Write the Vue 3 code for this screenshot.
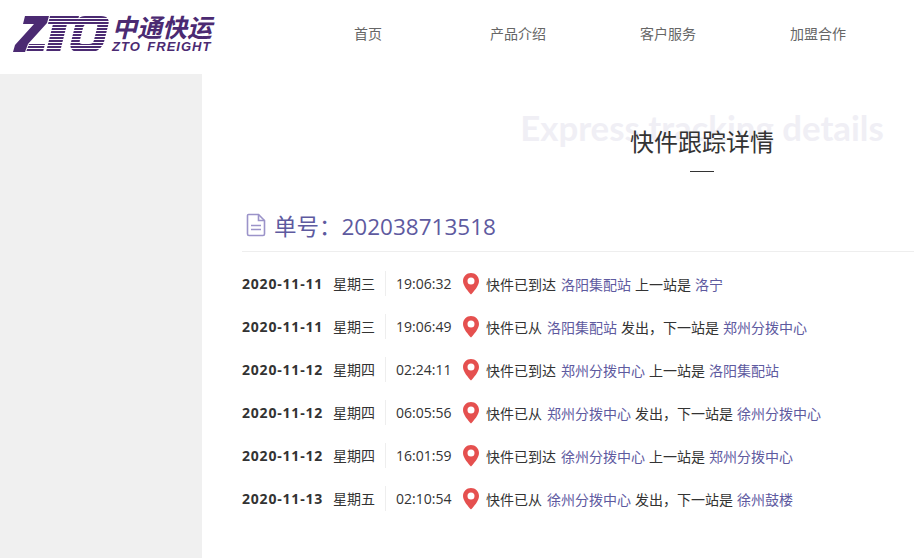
<template>
  <div class="page">
    <header class="top">
      <div class="logo">
        <svg class="logo-mark" width="97" height="36" viewBox="0 0 97 36">
          <defs>
            <pattern id="stripes" width="4" height="3" patternUnits="userSpaceOnUse">
              <rect width="4" height="2" fill="#4b2a72" />
            </pattern>
          </defs>
          <path d="M12 0H36L34 7L15 28L12 36H0L2 29L21 8H10Z" fill="#4b2a72" />
          <path d="M16 28H32L30 36H13Z" fill="url(#stripes)" />
          <path d="M37 0H66L64 8H54L47 36H33L40 8H35Z" fill="url(#stripes)" />
          <path fill-rule="evenodd" d="M72 0H88C95 0 97 4 95 10L91 26C89 32 84 36 78 36H66C59 36 56 32 58 26L62 10C64 4 66 0 72 0ZM75 8C72 8 71 9 70 12L67 24C66 27 67 28 70 28H76C79 28 80 27 81 24L84 12C85 9 84 8 81 8Z" fill="url(#stripes)" />
        </svg>
        <div class="logo-text">
          <div class="logo-cn">中通快运</div>
          <div class="logo-en">ZTO FREIGHT</div>
        </div>
      </div>
      <nav class="nav">
        <a v-for="item in navItems" :key="item" class="nav-item">{{ item }}</a>
      </nav>
    </header>

    <div class="body">
      <aside class="side"></aside>
      <main class="main">
        <div class="title-box">
          <div class="title-en">Express tracking details</div>
          <h1 class="title">快件跟踪详情</h1>
          <div class="title-line"></div>
        </div>

        <div class="bill">
          <svg class="bill-icon" width="20" height="24" viewBox="0 0 20 24" fill="none" stroke="#9b93c9" stroke-width="1.6">
            <path d="M2.5 1.5H12.5L18.5 7.5V21C18.5 22 18 22.5 17 22.5H3C2 22.5 1.5 22 1.5 21V2.5C1.5 2 2 1.5 2.5 1.5Z" />
            <path d="M12.5 1.5V7.5H18.5" />
            <path d="M5 12.5H15M5 16.5H15" />
          </svg>
          <span>单号：202038713518</span>
        </div>

        <ul class="track">
          <li v-for="row in rows" :key="row.time" class="row">
            <span class="date">{{ row.date }}</span>
            <span class="week">{{ row.week }}</span>
            <span class="time">{{ row.time }}</span>
            <svg class="pin" width="16" height="22" viewBox="0 0 16 22">
              <path fill-rule="evenodd" d="M8 0C3.6 0 0 3.5 0 7.9C0 13 5.5 18.6 8 21.5C10.500 18.6 16 13 16 7.900C16 3.500 12.400 0 8 0ZM8 4.400A3.500 3.500 0 1 1 8 11.400A3.500 3.500 0 1 1 8 4.400Z" fill="#e5504f" />
            </svg>
            <span class="desc">
              {{ row.a }}<a class="site">{{ row.from }}</a>{{ row.b }}<a class="site">{{ row.to }}</a>
            </span>
          </li>
        </ul>
      </main>
    </div>
  </div>
</template>

<script setup>
const navItems = ['首页', '产品介绍', '客户服务', '加盟合作']

const arrive = (date, week, time, from, to) => ({ date, week, time, a: '快件已到达', from, b: '上一站是', to })
const leave = (date, week, time, from, to) => ({ date, week, time, a: '快件已从', from, b: '发出，下一站是', to })

const rows = [
  arrive('2020-11-11', '星期三', '19:06:32', '洛阳集配站', '洛宁'),
  leave('2020-11-11', '星期三', '19:06:49', '洛阳集配站', '郑州分拨中心'),
  arrive('2020-11-12', '星期四', '02:24:11', '郑州分拨中心', '洛阳集配站'),
  leave('2020-11-12', '星期四', '06:05:56', '郑州分拨中心', '徐州分拨中心'),
  arrive('2020-11-12', '星期四', '16:01:59', '徐州分拨中心', '郑州分拨中心'),
  leave('2020-11-13', '星期五', '02:10:54', '徐州分拨中心', '徐州鼓楼')
]
</script>

<style>
html,
body {
  margin: 0;
  overflow: hidden;
  background: #fff;
}
</style>

<style scoped>
.page {
  width: 914px;
  height: 558px;
  overflow: hidden;
  font-family: "Open Sans", "Noto Sans CJK SC", sans-serif;
  color: #333;
}

.top {
  display: flex;
  height: 74px;
  box-sizing: border-box;
  padding-left: 13px;
}

.logo {
  display: flex;
  flex: none;
  width: 280px;
  padding-top: 16px;
}

.logo-mark {
  flex: none;
}

.logo-text {
  margin-top: -2px;
  margin-left: 2px;
  color: #4b2a72;
  white-space: nowrap;
}

.logo-cn {
  font-size: 25px;
  line-height: 26px;
  font-weight: 700;
  font-style: italic;
}

.logo-en {
  font-family: "Liberation Sans", sans-serif;
  font-size: 13px;
  line-height: 14px;
  font-weight: 700;
  font-style: italic;
  letter-spacing: 1px;
  word-spacing: 2px;
}

.nav {
  display: flex;
  flex: none;
  width: 600px;
}

.nav-item {
  width: 150px;
  text-align: center;
  font-size: 14px;
  line-height: 68px;
  color: #666;
}

.body {
  display: flex;
  height: 484px;
}

.side {
  flex: none;
  width: 202px;
  background: #f0f0f0;
}

.main {
  flex: none;
  width: 1000px;
  box-sizing: border-box;
  padding-left: 40px;
}

.title-box {
  position: relative;
  margin-left: -40px;
  height: 130px;
  text-align: center;
}

.title-en {
  position: absolute;
  left: 0;
  right: 0;
  top: 31px;
  font-family: Lato, sans-serif;
  font-size: 34.800px;
  line-height: 46px;
  font-weight: 700;
  color: #f0eff5;
}

.title {
  position: relative;
  margin: 0;
  padding-top: 51px;
  font-size: 24px;
  line-height: 34px;
  font-weight: 400;
  color: #333;
}

.title-line {
  position: relative;
  width: 24px;
  height: 1px;
  margin: 12px auto 0;
  background: #333;
}

.bill {
  display: flex;
  align-items: center;
  gap: 8px;
  height: 42px;
  padding-left: 4px;
  padding-bottom: 5px;
  border-bottom: 1px solid #eee;
  font-size: 22.500px;
  color: #5e5a9f;
}

.bill-icon {
  flex: none;
}

.track {
  list-style: none;
  margin: 10px 0 0;
  padding: 0;
}

.row {
  display: flex;
  align-items: center;
  height: 43px;
  font-size: 14px;
  white-space: nowrap;
}

.date {
  width: 91px;
  font-weight: 700;
  letter-spacing: 0.800px;
  color: #333;
}

.week {
  width: 52px;
  height: 25px;
  line-height: 25px;
  border-right: 1px solid #eee;
}

.time {
  width: 67px;
  margin-left: 10px;
}

.pin {
  flex: none;
  margin-right: 7px;
}

.site {
  margin: 0 4px 0 5px;
  color: #5e5a9f;
}

.site:last-child {
  margin-left: 4px;
}
</style>
